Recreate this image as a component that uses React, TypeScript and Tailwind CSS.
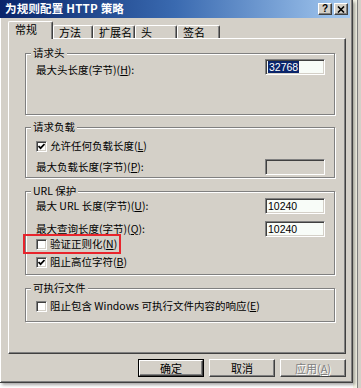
import type { ReactNode } from "react";

// classic Win2000 property sheet: "为规则配置 HTTP 策略"

function Check({ checked }: { checked?: boolean }) {
  return (
    <span className="w-[11px] h-[11px] shrink-0 bg-white border border-t-[#808080] border-l-[#808080] border-b-white border-r-white shadow-[inset_1px_1px_#404040,inset_-1px_-1px_#d4d0c8] flex items-center justify-center">
      {checked && (
        <svg width="7" height="7" viewBox="0 0 7 7">
          <path d="M0.5 3 L2.6 5.2 L6.5 1" stroke="#000" strokeWidth="1.7" fill="none" />
        </svg>
      )}
    </span>
  );
}

function Field({ value, selected, disabled }: { value?: string; selected?: boolean; disabled?: boolean }) {
  return (
    <div
      className={`w-[60px] h-[16px] shrink-0 border border-t-[#808080] border-l-[#808080] border-b-white border-r-white shadow-[inset_1px_1px_#404040,inset_-1px_-1px_#d4d0c8] flex items-center pl-[2px] font-['Liberation_Sans',sans-serif] text-[10.5px] leading-none ${
        disabled ? "bg-[#d4d0c8]" : "bg-[#f8fcf8]"
      }`}
    >
      {value && (
        <span className={selected ? "bg-[#0a246a] text-white px-[1px] py-[1px]" : ""}>{value}</span>
      )}
    </div>
  );
}

function Group({ title, className, children }: { title: string; className: string; children?: ReactNode }) {
  return (
    <div className={`relative border border-[#808080] shadow-[inset_1px_1px_#fff,1px_1px_#fff] pl-[10px] pr-[9px] ${className}`}>
      <span className="absolute -top-[8px] left-[5px] px-[2px] bg-[#d4d0c8] leading-[14px]">{title}</span>
      {children}
    </div>
  );
}

function CheckRow({ label, checked, className = "" }: { label: ReactNode; checked?: boolean; className?: string }) {
  return (
    <div className={`relative flex items-center gap-[3px] h-[14px] ${className}`}>
      <Check checked={checked} />
      <span className="leading-[14px]">{label}</span>
    </div>
  );
}

function Tab({ label, active, w }: { label: string; active?: boolean; w: string }) {
  return (
    <div
      className={`${w} shrink-0 bg-[#d4d0c8] border-t border-l border-r border-t-white border-l-white border-r-[#404040] shadow-[inset_-1px_0_#808080] rounded-t-[2px] flex items-center text-[11px] leading-none ${
        active ? "h-[18px] -mb-[1px] relative z-10 pl-[6px] pb-[2px]" : "h-[13px] pl-[5px] pt-[1px]"
      }`}
    >
      {label}
    </div>
  );
}

function Btn({ label, def, disabled }: { label: ReactNode; def?: boolean; disabled?: boolean }) {
  return (
    <div className={`w-[66px] h-[18px] ${def ? "border border-black" : ""}`}>
      <div
        className={`w-full h-full bg-[#d4d0c8] border border-t-white border-l-white border-r-[#404040] border-b-[#404040] shadow-[inset_-1px_-1px_#808080] flex items-center justify-center text-[11px] leading-none ${
          disabled ? "text-[#808080] [text-shadow:1px_1px_#fff]" : ""
        }`}
      >
        {label}
      </div>
    </div>
  );
}

export default function App() {
  return (
    <div className="w-[361px] h-[388px] bg-white flex overflow-hidden font-['Noto_Sans_CJK_SC',sans-serif] text-[10.5px] text-black">
      <div className="relative z-10 w-[353px] h-[383px] shrink-0 bg-[#d4d0c8] border-r border-b border-r-[#404040] border-b-[#404040] shadow-[inset_1px_0_#fff,inset_-1px_-1px_#808080,2px_2px_3px_rgba(0,0,0,0.35)] flex flex-col">
        {/* title bar */}
        <div className="h-[18px] mr-[2px] bg-gradient-to-r from-[#0a246a] via-[#3a6ab0] to-[#a6caf0] flex items-center pl-[5px] pr-[2px]">
          <span className="flex-1 text-white font-bold text-[11.5px] leading-none tracking-[0.2px]">为规则配置 HTTP 策略</span>
          <div className="flex gap-[2px]">
            <div className="w-[14px] h-[12px] bg-[#d4d0c8] border border-t-white border-l-white border-r-[#404040] border-b-[#404040] shadow-[inset_-1px_-1px_#808080] flex items-center justify-center font-['Liberation_Sans',sans-serif] font-bold text-[10px] leading-none">
              ?
            </div>
            <div className="w-[14px] h-[12px] bg-[#d4d0c8] border border-t-white border-l-white border-r-[#404040] border-b-[#404040] shadow-[inset_-1px_-1px_#808080] flex items-center justify-center">
              <svg width="8" height="7" viewBox="0 0 8 7">
                <path d="M1 0.5 L7 6.5 M7 0.5 L1 6.5" stroke="#000" strokeWidth="1.6" />
              </svg>
            </div>
          </div>
        </div>

        <div className="flex flex-col pl-[8px] pr-[6px]">
          {/* tabs */}
          <div className="flex items-end h-[17px] mt-[3px]">
            <Tab label="常规" active w="w-[45px]" />
            <Tab label="方法" w="w-[40px]" />
            <Tab label="扩展名" w="w-[42px]" />
            <Tab label="头" w="w-[42px]" />
            <Tab label="签名" w="w-[43px]" />
          </div>

          {/* page */}
          <div className="h-[316px] border border-t-white border-l-white border-r-[#404040] border-b-[#404040] shadow-[inset_-1px_-1px_#808080] pt-[14px] pl-[16px] pr-[10px] flex flex-col">
            <Group title="请求头" className="h-[62px] pt-[5px]">
              <div className="flex justify-between items-start">
                <span className="mt-[4px] leading-[14px]">
                  最大头长度(字节)(<u>H</u>):
                </span>
                <Field value="32768" selected />
              </div>
            </Group>

            <Group title="请求负载" className="h-[51px] mt-[12px] pt-[11px]">
              <CheckRow checked label={<>允许任何负载长度(<u>L</u>)</>} />
              <div className="flex justify-between items-center mt-[6px]">
                <span className="leading-[14px]">
                  最大负载长度(字节)(<u>P</u>):
                </span>
                <Field disabled />
              </div>
            </Group>

            <Group title="URL 保护" className="h-[84px] mt-[13px] pt-[6px]">
              <div className="flex justify-between items-center">
                <span className="leading-[14px]">
                  最大 URL 长度(字节)(<u>U</u>):
                </span>
                <Field value="10240" />
              </div>
              <div className="flex justify-between items-center mt-[7px]">
                <span className="leading-[14px]">
                  最大查询长度(字节)(<u>Q</u>):
                </span>
                <Field value="10240" />
              </div>
              <div className="relative">
                <CheckRow label={<>验证正则化(<u>N</u>)</>} />
                <div className="absolute -left-[13px] -top-[3px] w-[98px] h-[20px] border-2 border-[#e8242c]" />
              </div>
              <CheckRow checked className="mt-[4px]" label={<>阻止高位字符(<u>B</u>)</>} />
            </Group>

            <Group title="可执行文件" className="h-[34px] mt-[13px] pt-[10px]">
              <CheckRow label={<>阻止包含 Windows 可执行文件内容的响应(<u>E</u>)</>} />
            </Group>
          </div>

          {/* buttons */}
          <div className="flex justify-end gap-[5px] mt-[5px]">
            <Btn label="确定" def />
            <Btn label="取消" />
            <Btn label={<>应用(<u>A</u>)</>} disabled />
          </div>
        </div>
      </div>

      <div className="w-[4px] h-full bg-[#f4f4e6]" />
      <div className="w-[1px] h-full bg-[#808080]" />
      <div className="flex-1 h-full bg-[#d4d0c8]" />
    </div>
  );
}
